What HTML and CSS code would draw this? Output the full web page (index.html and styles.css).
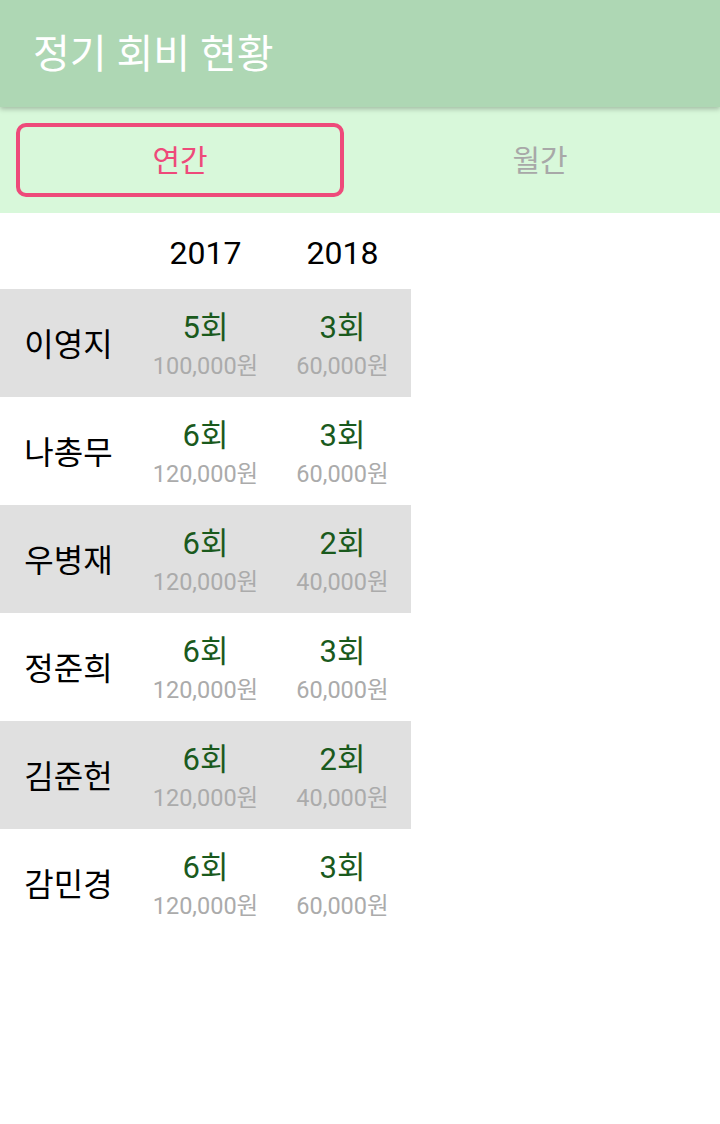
FILE: index.html
```html
<!DOCTYPE html>
<html lang="ko">
<head>
    <meta charset="UTF-8">
    <meta name="viewport" content="width=device-width, initial-scale=1.0">
    <title>정기 회비 현황</title>
    <link rel="stylesheet" href="styles.css">
</head>
<body>
    <header class="app-bar">
        <h1>정기 회비 현황</h1>
    </header>

    <nav class="tabs">
        <button class="tab active">연간</button>
        <button class="tab">월간</button>
    </nav>

    <table class="dues">
        <thead>
            <tr>
                <th></th>
                <th>2017</th>
                <th>2018</th>
            </tr>
        </thead>
        <tbody>
            <tr class="odd">
                <td class="name">이영지</td>
                <td><div class="count">5회</div><div class="amount">100,000원</div></td>
                <td><div class="count">3회</div><div class="amount">60,000원</div></td>
            </tr>
            <tr>
                <td class="name">나총무</td>
                <td><div class="count">6회</div><div class="amount">120,000원</div></td>
                <td><div class="count">3회</div><div class="amount">60,000원</div></td>
            </tr>
            <tr class="odd">
                <td class="name">우병재</td>
                <td><div class="count">6회</div><div class="amount">120,000원</div></td>
                <td><div class="count">2회</div><div class="amount">40,000원</div></td>
            </tr>
            <tr>
                <td class="name">정준희</td>
                <td><div class="count">6회</div><div class="amount">120,000원</div></td>
                <td><div class="count">3회</div><div class="amount">60,000원</div></td>
            </tr>
            <tr class="odd">
                <td class="name">김준헌</td>
                <td><div class="count">6회</div><div class="amount">120,000원</div></td>
                <td><div class="count">2회</div><div class="amount">40,000원</div></td>
            </tr>
            <tr>
                <td class="name">감민경</td>
                <td><div class="count">6회</div><div class="amount">120,000원</div></td>
                <td><div class="count">3회</div><div class="amount">60,000원</div></td>
            </tr>
        </tbody>
    </table>
</body>
</html>
```

FILE: styles.css
```css
body {
    font-family: Roboto, "Noto Sans CJK KR", sans-serif;
    margin: 0;
    background-color: white;
}
.app-bar {
    height: 107px;
    background-color: #aed7b4;
    box-shadow: 0 2px 5px rgba(0,0,0,0.25);
    position: relative;
    z-index: 1;
    display: flex;
    align-items: center;
}
.app-bar h1 {
    margin: 0 0 6px 33px;
    font-size: 40px;
    font-weight: normal;
    color: white;
}
.tabs {
    height: 106px;
    background-color: #d8f8da;
    display: flex;
    align-items: center;
    padding: 0 16px;
    gap: 32px;
}
.tab {
    flex: 1;
    height: 74px;
    margin-top: -1px;
    font-family: inherit;
    font-size: 30px;
    color: #a8a8a8;
    background: none;
    border: 4px solid transparent;
    border-radius: 10px;
    padding: 0 0 4px;
}
.tab.active {
    color: #ee4a7a;
    border-color: #ee4a7a;
}
.dues {
    width: 411px;
    border-collapse: collapse;
    table-layout: fixed;
}
.dues th {
    height: 76px;
    font-size: 32px;
    font-weight: normal;
    color: black;
    padding: 4px 0 0;
    box-sizing: border-box;
}
.dues td {
    height: 108px;
    padding: 4px 0 0;
    box-sizing: border-box;
    text-align: center;
}
.dues tr.odd {
    background-color: #e0e0e0;
}
.dues td.name {
    font-size: 32px;
    color: black;
    padding: 0 0 2px;
}
.count {
    font-size: 31px;
    color: #1a5a1d;
    line-height: 42px;
}
.amount {
    font-size: 23.5px;
    color: #ababab;
    line-height: 34px;
}
```
